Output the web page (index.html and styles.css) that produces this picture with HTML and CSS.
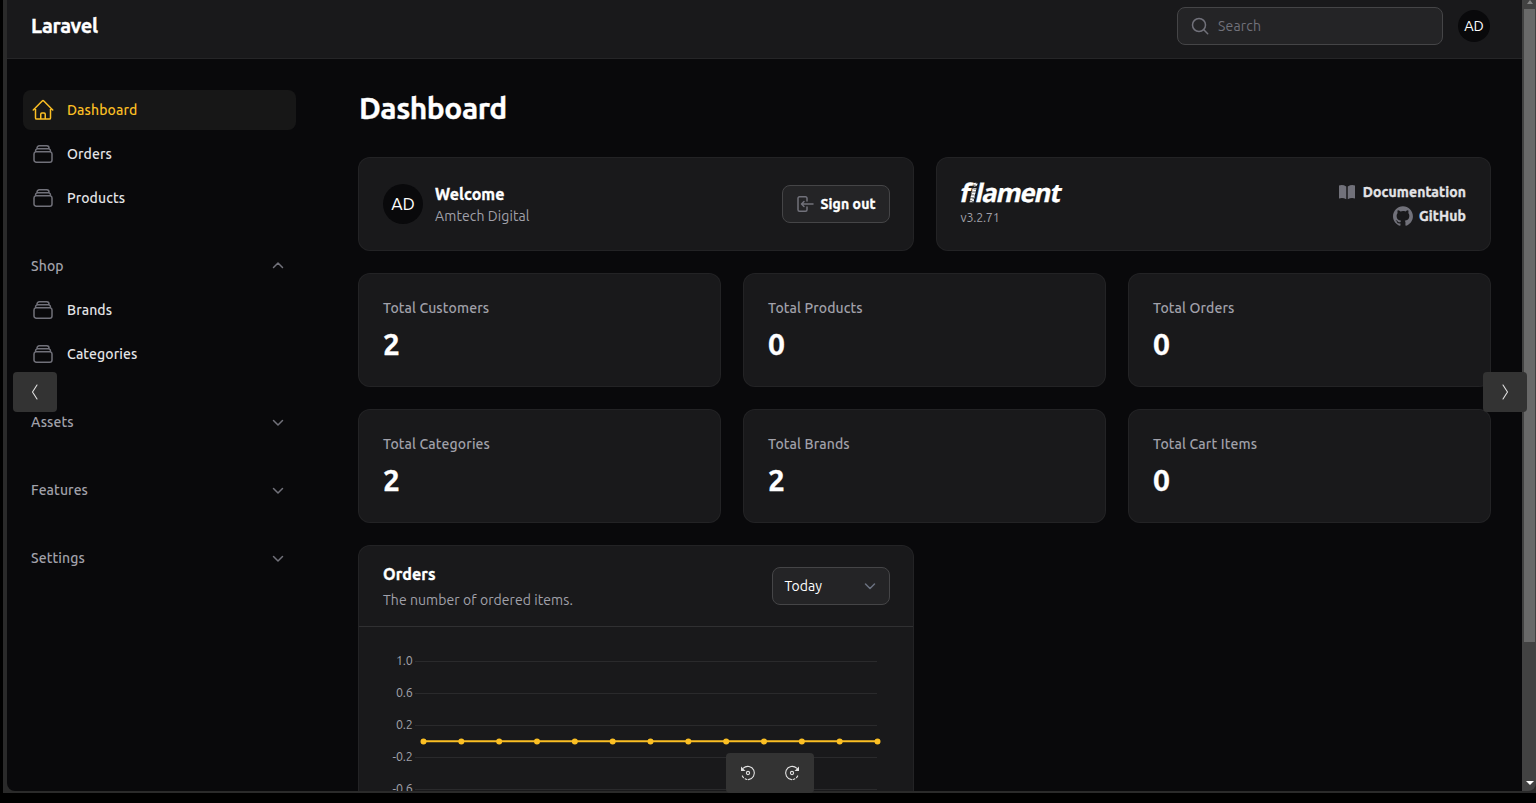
FILE: index.html
```html
<!DOCTYPE html>
<html lang="en">
<head>
<meta charset="utf-8">
<title>Dashboard - Laravel</title>
<link rel="stylesheet" href="styles.css">
</head>
<body>
<svg class="defs" width="0" height="0">
  <symbol id="stack" viewBox="0 0 24 24"><path d="M6 6.878V6a2.25 2.25 0 0 1 2.25-2.25h7.5A2.25 2.25 0 0 1 18 6v.878m-12 0c.235-.083.487-.128.75-.128h10.5c.263 0 .515.045.75.128m-12 0A2.25 2.25 0 0 0 4.5 9v.878m13.5-3A2.25 2.25 0 0 1 19.5 9v.878m0 0a2.246 2.246 0 0 0-.75-.128H5.25c-.263 0-.515.045-.75.128m15 0A2.25 2.25 0 0 1 21 12v6a2.25 2.25 0 0 1-2.25 2.25H5.25A2.25 2.25 0 0 1 3 18v-6c0-.98.626-1.813 1.5-2.122"/></symbol>
  <symbol id="down" viewBox="0 0 20 20"><path d="M5.500 8.500l4.500 4.500L14.500 8.500"/></symbol>
  <symbol id="up" viewBox="0 0 20 20"><path d="M5.500 11.500l4.500-4.500 4.500 4.500"/></symbol>
</svg>
<div class="window">
  <div class="page">
    <header class="topbar">
      <div class="brand">Laravel</div>
      <div class="tools">
        <div class="search">
          <svg class="search-icon" viewBox="0 0 20 20"><circle cx="9" cy="9" r="6.500"/><path d="M13.800 13.800l3.900 3.900"/></svg>
          <span class="placeholder">Search</span>
        </div>
        <div class="avatar">AD</div>
      </div>
    </header>
    <div class="body">
      <nav class="sidebar">
        <div class="group">
          <a class="item active"><svg class="ico" viewBox="0 0 24 24"><path d="m2.250 12 8.954-8.955c.44-.439 1.152-.439 1.591 0L21.750 12M4.500 9.750v10.125c0 .621.504 1.125 1.125 1.125H9.750v-4.875c0-.621.504-1.125 1.125-1.125h2.250c.621 0 1.125.504 1.125 1.125V21h4.125c.621 0 1.125-.504 1.125-1.125V9.750M8.250 21h8.250"/></svg><span>Dashboard</span></a>
          <a class="item"><svg class="ico"><use href="#stack"/></svg><span>Orders</span></a>
          <a class="item"><svg class="ico"><use href="#stack"/></svg><span>Products</span></a>
        </div>
        <div class="group">
          <div class="label"><span>Shop</span><svg class="chev"><use href="#up"/></svg></div>
          <a class="item"><svg class="ico"><use href="#stack"/></svg><span>Brands</span></a>
          <a class="item"><svg class="ico"><use href="#stack"/></svg><span>Categories</span></a>
        </div>
        <div class="group"><div class="label"><span>Assets</span><svg class="chev"><use href="#down"/></svg></div></div>
        <div class="group"><div class="label"><span>Features</span><svg class="chev"><use href="#down"/></svg></div></div>
        <div class="group"><div class="label"><span>Settings</span><svg class="chev"><use href="#down"/></svg></div></div>
      </nav>
      <main class="main">
        <h1 class="title">Dashboard</h1>
        <div class="row two">
          <section class="card account">
            <div class="avatar large">AD</div>
            <div class="who"><div class="welcome">Welcome</div><div class="muted name">Amtech Digital</div></div>
            <button class="signout"><svg viewBox="0 0 20 20"><path d="M12 7V4.300a1.500 1.500 0 0 0-1.500-1.500H4.500A1.500 1.500 0 0 0 3 4.300v11.400a1.500 1.500 0 0 0 1.500 1.500h6a1.500 1.500 0 0 0 1.500-1.500V13M18 10H7M9 7.500L6.500 10 9 12.500"/></svg><span>Sign out</span></button>
          </section>
          <section class="card info">
            <div class="product">
              <div class="logo">f<span class="hatched">i</span>lament</div>
              <div class="version">v3.2.71</div>
            </div>
            <div class="links">
              <a class="link"><svg class="book" viewBox="0 0 20 20"><path d="M9.250 4.400Q5.500 2.200 2 3.500V16.500Q5.500 15 9.250 17.200ZM10.750 17.200Q14.500 15 18 16.500V3.500Q14.500 2.200 10.750 4.400Z"/></svg><span>Documentation</span></a>
              <a class="link"><svg class="hub" viewBox="0 0 98 96"><path fill-rule="evenodd" d="M48.854 0C21.839 0 0 22 0 49.217c0 21.756 13.993 40.172 33.405 46.690 2.427.490 3.316-1.059 3.316-2.362 0-1.141-.080-5.052-.080-9.127-13.590 2.934-16.420-5.867-16.420-5.867-2.184-5.704-5.420-7.170-5.420-7.170-4.448-3.015.324-3.015.324-3.015 4.934.326 7.523 5.052 7.523 5.052 4.367 7.496 11.404 5.378 14.235 4.074.404-3.178 1.699-5.378 3.074-6.600-10.839-1.141-22.243-5.378-22.243-24.283 0-5.378 1.940-9.778 5.014-13.200-.485-1.222-2.184-6.275.486-13.038 0 0 4.125-1.304 13.426 5.052a46.970 46.970 0 0 1 12.214-1.630c4.125 0 8.330.571 12.213 1.630 9.302-6.356 13.427-5.052 13.427-5.052 2.670 6.763.970 11.816.485 13.038 3.155 3.422 5.015 7.822 5.015 13.200 0 18.905-11.404 23.060-22.324 24.283 1.780 1.548 3.316 4.481 3.316 9.126 0 6.600-.080 11.897-.080 13.526 0 1.304.890 2.853 3.316 2.364 19.412-6.520 33.405-24.935 33.405-46.691C97.707 22 75.788 0 48.854 0z"/></svg><span>GitHub</span></a>
            </div>
          </section>
        </div>
        <div class="row three">
          <section class="card stat"><div class="stat-label">Total Customers</div><div class="value">2</div></section>
          <section class="card stat"><div class="stat-label">Total Products</div><div class="value">0</div></section>
          <section class="card stat"><div class="stat-label">Total Orders</div><div class="value">0</div></section>
          <section class="card stat"><div class="stat-label">Total Categories</div><div class="value">2</div></section>
          <section class="card stat"><div class="stat-label">Total Brands</div><div class="value">2</div></section>
          <section class="card stat"><div class="stat-label">Total Cart Items</div><div class="value">0</div></section>
        </div>
        <div class="row two">
          <section class="card chart">
            <div class="chart-head">
              <div><div class="chart-title">Orders</div><div class="muted subtitle">The number of ordered items.</div></div>
              <div class="select"><span>Today</span><svg viewBox="0 0 20 20"><path d="M5.500 8l4.500 4.500 4.500-4.500"/></svg></div>
            </div>
            <svg class="plot" width="554" height="300" viewBox="0 0 554 300">
              <path class="grid" d="M56 34.500H518M56 66.500H518M56 98.500H518M56 130.500H518M56 162.500H518"/>
              <g class="ticks"><text x="53.500" y="38">1.0</text><text x="53.500" y="70">0.6</text><text x="53.500" y="102">0.2</text><text x="53.500" y="134">-0.2</text><text x="53.500" y="166">-0.6</text></g>
              <path class="series" d="M64.500 114.300H518.500"/>
              <path class="dots" d="M64.500 114.500h0M102.330 114.500h0M140.170 114.500h0M178 114.500h0M215.830 114.500h0M253.670 114.500h0M291.500 114.500h0M329.330 114.500h0M367.170 114.500h0M405 114.500h0M442.830 114.500h0M480.670 114.500h0M518.500 114.500h0"/>
            </svg>
          </section>
        </div>
      </main>
    </div>
  </div>
  <div class="scrollbar"><i class="arrow-up"></i><div class="thumb"></div><i class="arrow-down"></i></div>
</div>
<div class="overlay prev"><svg width="44" height="40"><path d="M24 13l-4.500 7 4.500 7"/></svg></div>
<div class="overlay next"><svg width="44" height="40"><path d="M20 13l4.500 7-4.500 7"/></svg></div>
<div class="overlay rotate">
  <svg width="44" height="40"><path d="M17.300 15.200A6.600 6.600 0 1 1 22.500 26.600"/><path class="dash" d="M21 26.500A6.600 6.600 0 0 1 16 22"/><circle cx="22" cy="20" r="1.600"/><path class="tip" d="M15 13.500v4.500h4.500z"/></svg>
  <svg width="44" height="40"><path d="M26.700 15.200A6.600 6.600 0 1 0 21.500 26.600"/><path class="dash" d="M23 26.500A6.600 6.600 0 0 0 28 22"/><circle cx="22" cy="20" r="1.600"/><path class="tip" d="M29 13.500v4.500h-4.500z"/></svg>
</div>
</body>
</html>
```
FILE: styles.css
```css
* { box-sizing: border-box; }
body { margin: 0; height: 803px; overflow: hidden; position: relative; background: #000; padding-left: 3px; color: #fff; font-family: Ubuntu, "Noto Sans", "Open Sans", sans-serif; font-size: 14px; }
svg { display: block; fill: none; stroke: currentColor; stroke-width: 1.5; stroke-linecap: round; stroke-linejoin: round; flex: none; }
.defs { position: absolute; }
.window { display: flex; height: 793px; border-left: 4px solid #2a2a2a; border-bottom: 2px solid #2a2a2a; background: #2a2a2a; }
.page { flex: 1; height: 791px; overflow: hidden; background: #09090b; border-bottom-left-radius: 8px; }
.topbar { height: 59px; border-bottom: 1px solid #252527; background: #19191b; padding: 0 32px 6px 24px; display: flex; align-items: center; justify-content: space-between; }
.brand { font-size: 20px; font-weight: 700; letter-spacing: -.3px; line-height: 28px; }
.brand, .title, .value, .welcome, .chart-title, .signout, .link { -webkit-text-stroke: .35px currentColor; }
.tools { display: flex; align-items: center; gap: 15px; }
.search { width: 266px; height: 38px; border: 1px solid #454547; border-radius: 8px; background: #242426; display: flex; align-items: center; padding-left: 12px; gap: 8px; color: #71717a; }
.search-icon { width: 20px; height: 20px; }
.placeholder { font-size: 14px; letter-spacing: .2px; }
.avatar { width: 32px; height: 32px; border-radius: 50%; background: #09090b; display: grid; place-items: center; font-size: 14.5px; padding-bottom: 2px; }
.body { display: flex; }
.sidebar { width: 320px; padding: 31px 31px 0 16px; display: flex; flex-direction: column; gap: 28px; }
.group { display: flex; flex-direction: column; gap: 4px; }
.item, .label { height: 40px; border-radius: 8px; display: flex; align-items: center; font-weight: 500; line-height: 24px; letter-spacing: .1px; }
.item { padding-left: 8px; gap: 12px; color: #e4e4e7; }
.ico { width: 24px; height: 24px; color: #71717a; }
.active { background: #171717; color: #fbbf24; }
.active .ico { color: #fbbf24; }
.label { padding: 0 8px; justify-content: space-between; color: #a1a1aa; }
.chev { width: 20px; height: 20px; color: #71717a; }
.main { flex: 1; padding: 31px 32px 0; display: flex; flex-direction: column; }
.title { margin: 0 0 32px; font-size: 30px; line-height: 36px; font-weight: 700; letter-spacing: -.5px; }
.row { display: grid; gap: 24px; margin-bottom: 24px; }
.two { grid-template-columns: 1fr 1fr; }
.three { grid-template-columns: repeat(3, 1fr); }
.card { background: #19191b; border-radius: 11px; box-shadow: 0 0 0 1px #232325; min-width: 0; }
.account, .info { height: 92px; display: flex; align-items: center; padding: 0 24px; }
.account { padding-right: 23px; }
.large { width: 40px; height: 40px; font-size: 17.5px; }
.who { margin-left: 12px; flex: 1; }
.welcome { font-size: 16px; line-height: 24px; font-weight: 700; letter-spacing: .1px; margin-top: -1px; }
.muted { color: #a1a1aa; }
.name { line-height: 20px; letter-spacing: .1px; }
.signout { width: 108px; height: 38px; border: 1px solid #454547; border-radius: 8px; background: #242426; color: #fff; display: flex; align-items: center; padding: 0 12px 0 12px; gap: 6px; font: 700 14px/20px Ubuntu, "Noto Sans", sans-serif; letter-spacing: .1px; white-space: nowrap; }
.signout svg { width: 20px; height: 20px; color: #71717a; }
.info { justify-content: space-between; }
.logo { font: 700 25.5px/30px "Open Sans", sans-serif; letter-spacing: -1.100px; height: 30px; width: max-content; margin-top: -6px; transform: skewX(-12deg); -webkit-text-stroke: .3px currentColor; }
.hatched { background: repeating-linear-gradient(15deg, #fff 0 2px, #555 2px 3px); -webkit-background-clip: text; background-clip: text; color: transparent; }
.version { font-size: 12.5px; line-height: 16px; color: #a1a1aa; margin-top: 2px; letter-spacing: -.2px; }
.links { display: flex; flex-direction: column; align-items: flex-end; }
.link { height: 24px; display: flex; align-items: center; gap: 6px; color: #e4e4e7; font-weight: 700; letter-spacing: .1px; }
.link svg { width: 20px; height: 20px; fill: #71717a; stroke: none; }
.stat { height: 112px; padding: 24px; }
.stat-label { line-height: 20px; font-weight: 500; color: #a1a1aa; letter-spacing: .12px; }
.value { font-size: 30px; line-height: 36px; font-weight: 700; margin-top: 8px; }
.chart { height: 400px; }
.chart-head { height: 81px; border-bottom: 1px solid #303032; padding: 0 23px 0 24px; display: flex; justify-content: space-between; align-items: center; }
.chart-title { font-size: 16px; font-weight: 700; line-height: 24px; letter-spacing: .1px; margin-top: -1px; }
.subtitle { line-height: 20px; margin-top: 4px; letter-spacing: .07px; }
.select { width: 118px; height: 38px; border: 1px solid #454547; border-radius: 8px; background: #242426; display: flex; align-items: center; justify-content: space-between; padding: 0 9px 0 12px; }
.select svg { width: 20px; height: 20px; color: #6b7280; }
.plot { stroke-linecap: butt; }
.grid { stroke: #2a2a2c; stroke-width: 1; }
.ticks { fill: #a1a1aa; stroke: none; font-size: 12.5px; letter-spacing: -.2px; text-anchor: end; }
.series { stroke: #fbbf24; stroke-width: 2; }
.dots { stroke: #fbbf24; stroke-width: 6; stroke-linecap: round; }
.scrollbar { width: 14px; height: 791px; background: #424242; border-bottom-right-radius: 8px; display: flex; flex-direction: column; align-items: center; padding-left: 1px; }
.arrow-up { border: 3px solid transparent; border-bottom: 4px solid #858585; border-top: 0; margin-bottom: 5px; }
.thumb { width: 11px; height: 633px; background: #696969; }
.arrow-down { border: 4px solid transparent; border-top-color: #fff; border-bottom: 0; margin-top: auto; margin-bottom: 6px; }
.overlay { position: absolute; height: 40px; border-radius: 4px; background: #333; color: #e2e2e2; display: flex; }
.overlay svg { stroke-width: 1.100; }
.prev { left: 13px; top: 372px; }
.next { left: 1483px; top: 372px; }
.rotate { left: 726px; top: 753px; }
.dash { stroke-dasharray: 2 2; }
.tip { fill: currentColor; stroke: none; }
```
